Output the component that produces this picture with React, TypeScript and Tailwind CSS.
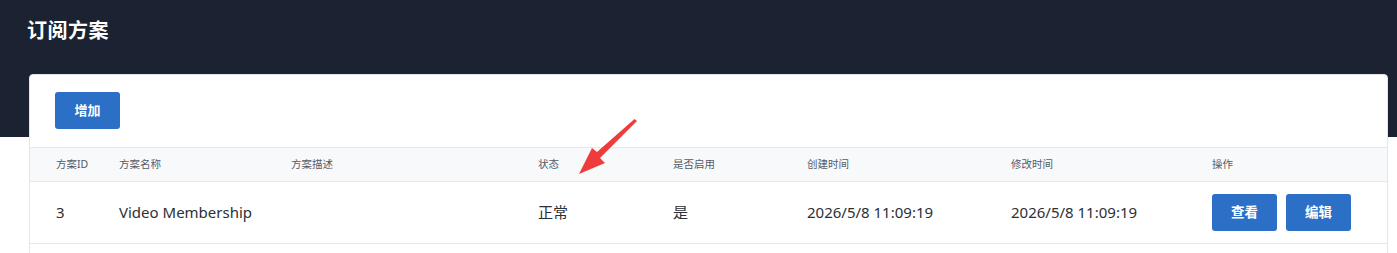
import React from "react";

const font = { fontFamily: '"Noto Sans", "Noto Sans CJK SC", sans-serif' };

export default function App() {
  const cols = "grid grid-cols-[63px_172px_247px_135px_134px_204px_201px_1fr] pl-[26px]";
  return (
    <div className="relative w-[1397px] h-[253px] bg-white overflow-hidden" style={font}>
      <div className="h-[137px] bg-[#1b2333] pl-[27px] pt-[16px]">
        <h1 className="text-[20px] font-bold text-white leading-[30px] tracking-[0.5px]">订阅方案</h1>
      </div>
      <div className="-mt-[63px] ml-[29px] mr-[9px] bg-white border border-[#e3e6ea] rounded-[4px]">
        <div className="pt-[17px] pb-[18px] pl-[25px]">
          <button className="w-[65px] h-[37px] rounded-[3px] bg-[#2b6fc6] text-white text-[13px] font-semibold">增加</button>
        </div>
        <div className={`${cols} h-[35px] items-center bg-[#f8f9fb] border-t border-b border-[#e6e8eb] text-[10.5px] text-[#555b66]`}>
          <div>方案ID</div>
          <div>方案名称</div>
          <div>方案描述</div>
          <div>状态</div>
          <div>是否启用</div>
          <div>创建时间</div>
          <div>修改时间</div>
          <div>操作</div>
        </div>
        <div className={`${cols} h-[62px] items-center border-b border-[#e6e8eb] text-[15px] text-[#2b2f36]`}>
          <div>3</div>
          <div>Video Membership</div>
          <div></div>
          <div>正常</div>
          <div>是</div>
          <div>2026/5/8 11:09:19</div>
          <div>2026/5/8 11:09:19</div>
          <div className="flex gap-[9px]">
            <button className="w-[65px] h-[37px] rounded-[3px] bg-[#2b6fc6] text-white text-[13.5px] font-semibold">查看</button>
            <button className="w-[65px] h-[37px] rounded-[3px] bg-[#2b6fc6] text-white text-[13.5px] font-semibold">编辑</button>
          </div>
        </div>
        <div className="h-[20px]"></div>
      </div>
      <svg className="absolute left-0 top-0 pointer-events-none" width="1397" height="253">
        <polygon points="637,121 634.5,119 597,152 592,148 579,174 605,163 600,158" fill="#ee3b3b" />
      </svg>
    </div>
  );
}
